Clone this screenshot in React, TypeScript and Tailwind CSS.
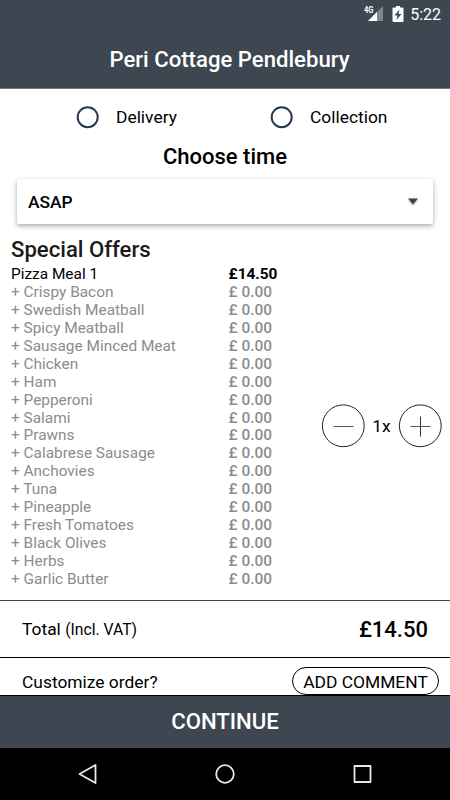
const toppings = [
  "Crispy Bacon",
  "Swedish Meatball",
  "Spicy Meatball",
  "Sausage Minced Meat",
  "Chicken",
  "Ham",
  "Pepperoni",
  "Salami",
  "Prawns",
  "Calabrese Sausage",
  "Anchovies",
  "Tuna",
  "Pineapple",
  "Fresh Tomatoes",
  "Black Olives",
  "Herbs",
  "Garlic Butter",
];

function StatusBar() {
  return (
    <div className="flex h-[30px] items-center justify-end pr-[9px] text-white">
      <svg width="20" height="18" viewBox="0 0 20 18" className="mt-[-2px] mr-[8px]">
        <path d="M19 1v15H4z" fill="#fff" fillOpacity="0.35" />
        <path d="M13 7V16H4z" fill="#fff" />
        <text x="0" y="8" fontSize="9" fontWeight="700" fill="#fff" textLength="9.5" lengthAdjust="spacingAndGlyphs">
          4G
        </text>
      </svg>
      <svg width="12" height="18" viewBox="0 0 12 18" className="mt-[-2px] mr-[6px]">
        <path d="M4 1h4v1.500h2.500q1 0 1 1V16q0 1-1 1h-9q-1 0-1-1V3.500q0-1 1-1H4z" fill="#fff" />
        <path d="M7.500 4.500 2.500 10.500h3L4.500 15l5-6h-3z" fill="#3d4651" />
      </svg>
      <span className="text-[16px] leading-[30px]">5:22</span>
    </div>
  );
}

function OrderType({ label }: { label: string }) {
  return (
    <label className="flex h-full items-center text-[17.400px] leading-[20px]">
      <svg width="24" height="24" viewBox="0 0 24 24" className="mr-[16px]">
        <circle cx="11.700" cy="12.200" r="10" fill="none" stroke="#26374d" strokeWidth="2" />
      </svg>
      {label}
    </label>
  );
}

function QuantityButton({ plus = false }: { plus?: boolean }) {
  return (
    <button aria-label={plus ? "Increase" : "Decrease"}>
      <svg width="44" height="44" viewBox="0 0 44 44" fill="none" stroke="#222" strokeWidth="1">
        <circle cx="22.300" cy="21.800" r="20.900" />
        <path d="M12.500 22.500h20" stroke="#555" />
        {plus && <path d="M22.500 12.500v20" stroke="#333" />}
      </svg>
    </button>
  );
}

export default function App() {
  return (
    <div className="flex h-[800px] w-[450px] flex-col overflow-hidden bg-white font-['Roboto',sans-serif] text-black">
      <header className="h-[89px] shrink-0 border-b border-[#727982] bg-[#3d4651]">
        <StatusBar />
        <h1 className="pl-[9px] text-center text-[22.150px] leading-[59px] font-medium text-white">
          Peri Cottage Pendlebury
        </h1>
      </header>

      <main className="flex h-[511px] shrink-0 flex-col">
        <div className="flex h-[56px] pl-[76px]">
          <div className="w-[194px]">
            <OrderType label="Delivery" />
          </div>
          <OrderType label="Collection" />
        </div>
        <h2 className="h-[34px] text-center text-[22px] leading-[23px] font-medium">Choose time</h2>

        {/* Time picker */}
        <button className="mx-[17px] flex h-[45px] shrink-0 items-center justify-between rounded-[2px] bg-white pr-[14px] pl-[11px] shadow-[0_2px_5px_rgba(0,0,0,0.35)]">
          <span className="pt-[2px] text-[17.400px] font-medium">ASAP</span>
          <svg width="12" height="11" viewBox="0 0 12 11" className="overflow-visible drop-shadow-[0_1px_1px_rgba(0,0,0,0.3)]">
            <path d="M1 2.500h10L6 8.500z" fill="#424242" />
          </svg>
        </button>

        {/* Basket */}
        <section className="relative pt-[12px] pl-[11px]">
          <h2 className="mb-[3px] text-[22.150px] leading-[27px] font-medium text-[#1d1a1b]">Special Offers</h2>
          <div className="grid grid-cols-[217.500px_1fr] text-[15.400px] leading-[17.930px]">
            <span>Pizza Meal 1</span>
            <span className="font-bold">£14.50</span>
            {toppings.map((topping) => (
              <div key={topping} className="col-span-2 grid grid-cols-subgrid text-[#8c8c8c]">
                <span>+ {topping}</span>
                <span className="font-medium">£ 0.00</span>
              </div>
            ))}
          </div>
          <div className="absolute top-[180px] right-[8px] flex items-center">
            <QuantityButton />
            <span className="w-[33px] text-center text-[17.400px]">1x</span>
            <QuantityButton plus />
          </div>
        </section>
      </main>

      <div className="flex h-[58px] shrink-0 items-center justify-between border-y border-t-[#444] border-b-black pt-[1px] pr-[22px] pl-[22px]">
        <span className="text-[17.400px]">
          Total <span className="text-[15.700px]">(Incl. VAT)</span>
        </span>
        <span className="text-[22px] font-medium">£14.50</span>
      </div>
      <div className="flex h-[37px] shrink-0 items-end justify-between pr-[11px] pl-[22px]">
        <span className="pb-[3px] text-[17.400px] leading-[20px]">Customize order?</span>
        <button className="h-[28px] w-[147px] rounded-full border border-black text-[17.400px] leading-[28px]">
          ADD COMMENT
        </button>
      </div>

      <button className="h-[53px] shrink-0 border-t border-black bg-[#3d4651] text-[22.150px] font-medium text-white">
        CONTINUE
      </button>

      {/* Android navigation */}
      <nav className="h-[52px] shrink-0 bg-black">
        <svg width="450" height="52" fill="none" stroke="#e8e8e8" strokeWidth="1.800" strokeLinejoin="round">
          <path d="M95.500 17v18L79.500 26z" />
          <circle cx="225" cy="26" r="8.800" />
          <rect x="354.500" y="18" width="16" height="16" />
        </svg>
      </nav>
    </div>
  );
}
